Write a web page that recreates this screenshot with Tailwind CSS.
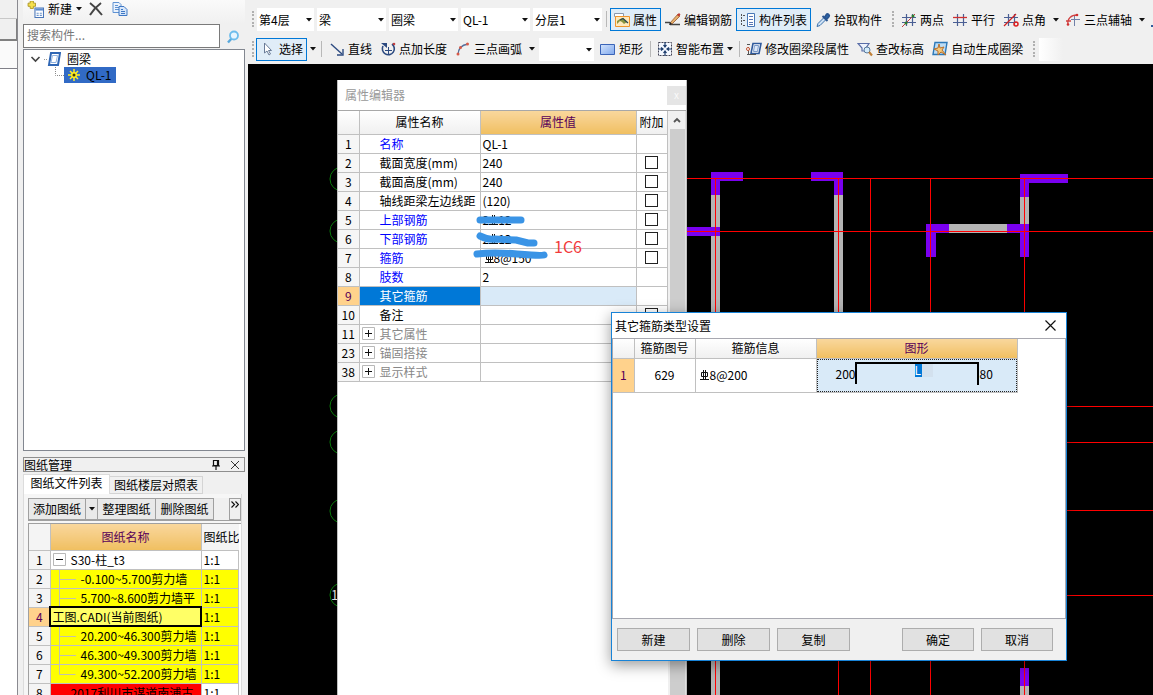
<!DOCTYPE html>
<html lang="zh-CN">
  <head>
    <meta charset="UTF-8" />
    <title>圈梁 - 属性编辑器</title>
    <meta name="viewport" content="width=device-width, initial-scale=1.0" />
    <script src="https://cdn.jsdelivr.net/npm/@tailwindcss/browser@4"></script>
  </head>
  <body class="flex h-screen overflow-hidden bg-[#f0f0f0] font-['Noto_Sans_CJK_SC',sans-serif] text-xs leading-4 text-black">

    <!-- Símbolos compartidos -->
    <svg class="hidden">
      <symbol id="flecha" viewBox="0 0 6 4"><path d="M0 0h6L3 3.5z" fill="#111" /></symbol>
      <symbol id="barra" viewBox="0 0 9 10"><path d="M3.500 0v9M5.500 0v9M1.500 2.500h6v4h-6zM0 9.500h9" fill="none" stroke="#111" /></symbol>
      <symbol id="mas" viewBox="0 0 13 13"><path d="M.5.5h12v12H.5z" fill="#fff" stroke="#b8b8b8" /><path d="M3 6.500h7M6.500 3v7" stroke="#111" /></symbol>
      <symbol id="rejilla" viewBox="0 0 16 16"><path d="M5.500 2v12M11.500 2v12M1 5.500h14M1 10.500h14" stroke="#4a5f94" stroke-width="1.200" fill="none" /></symbol>
    </svg>

    <!-- Borde izquierdo -->
    <div class="flex w-[18px] shrink-0 flex-col border-r border-[#8a8a90]">
      <div class="h-[19px] border-b border-[#c8c8c8]"></div>
      <div class="h-[22px] border-r border-b-2 border-[#808080]"></div>
      <div class="h-[27px] bg-[#fafafa]"></div>
      <div class="flex-1 border-t border-[#808088] bg-white"></div>
    </div>

    <!-- Panel de componentes y planos -->
    <aside class="flex w-[230px] shrink-0 flex-col pr-[3px] pl-[5px]">
      <div class="flex h-6 shrink-0 items-start bg-gradient-to-b from-[#fafafa] to-[#f0f0f0] pl-1">
        <button class="flex h-[18px] items-center gap-1">
          <svg class="h-[17px] w-[17px]" viewBox="0 0 16 16">
            <path d="M3 0h3v2h2v3H6v2H3V5H1V2h2z" fill="#f5e04c" stroke="#a8901c" stroke-width=".8" />
            <path d="M7.500 6.500h8v9h-8z" fill="#fff" stroke="#4a76b8" /><path d="M8 7h7v2H8z" fill="#5c8cd0" />
            <path d="M9 11.500h2M12 11.500h2M9 13.500h2M12 13.500h2" stroke="#6b94cc" />
          </svg>
          <span>新建</span>
          <svg class="h-1 w-1.5"><use href="#flecha" /></svg>
        </button>
        <button class="ml-1 flex h-[18px] w-5 items-center justify-center" aria-label="删除构件">
          <svg class="h-[14px] w-[14px]" viewBox="0 0 14 14"><path d="M1 1c4 3 8 7 12 12M12 1C8 4 4 8 1 13" fill="none" stroke="#444" stroke-width="2" /></svg>
        </button>
        <button class="ml-1 flex h-[18px] w-5 items-center justify-center" aria-label="复制构件">
          <svg class="h-4 w-4" viewBox="0 0 16 16">
            <path d="M1 1.500h6l2 2v8H1z" fill="#eaf2fc" stroke="#5f92d2" /><path d="M3 4.500h3M3 6.500h4M3 8.500h4" stroke="#5f92d2" />
            <path d="M7 5.500h5l3 3v6H7z" fill="#d6e6fa" stroke="#3f78c4" /><path d="M9 8.500h2M9 10.500h4M9 12.500h4" stroke="#3f78c4" />
          </svg>
        </button>
      </div>

      <div class="flex h-[25px] shrink-0">
        <input type="text" placeholder="搜索构件..." aria-label="搜索构件"
          class="h-6 w-[197px] border border-[#7a7a7a] bg-white px-[3px] pb-1 text-xs placeholder:text-[#777]" />
        <button class="flex flex-1 items-center justify-center" aria-label="搜索">
          <svg class="h-[14px] w-[14px]" viewBox="0 0 14 14"><path d="M6 8L2 12.500" stroke="#58a8dc" stroke-width="2.400" /><circle cx="8" cy="5.500" r="4" fill="#e6f5ff" stroke="#6cbcec" stroke-width="1.800" /></svg>
        </button>
      </div>

      <!-- Árbol -->
      <div class="h-[402px] shrink-0 border border-[#828790] bg-white">
        <div class="flex h-[17px] items-center pl-1.5">
          <svg class="h-4 w-[31px]" viewBox="0 0 31 16">
            <path d="M1.500 6l4 4 4-4" fill="none" stroke="#444" stroke-width="1.600" />
            <path d="M14 8.500h3" stroke="#999" stroke-dasharray="1 1" />
            <path d="M21 2h9l-2 12h-9z" fill="#fff" stroke="#2f66b4" stroke-width="2" /><path d="M22.500 4.500h5l-1.500 7h-5z" fill="#fff" stroke="#8fb2e0" />
          </svg>
          <span class="ml-1.5">圈梁</span>
        </div>
        <div class="flex h-4 items-center pl-[30px]">
          <svg class="h-4 w-2.5" viewBox="0 0 10 16"><path d="M1.500 0v8.500H10" fill="none" stroke="#888" stroke-dasharray="1 1" /></svg>
          <span class="flex h-4 items-center bg-[#316ac5] pr-1 pl-1">
            <svg class="h-3 w-3" viewBox="0 0 12 12"><path d="M6 0v12M0 6h12M2 2l8 8M10 2l-8 8" stroke="#ffee22" stroke-width="1.500" /><circle cx="6" cy="6" r="3" fill="#ffee22" /><circle cx="6" cy="6" r="1.500" fill="#443c00" /></svg>
            <span class="ml-1.5">QL-1</span>
          </span>
        </div>
      </div>

      <!-- Gestión de planos -->
      <div class="mt-1.5 flex h-[15px] shrink-0 items-center border border-[#8e8e8e]">
        <h2 class="flex-1">图纸管理</h2>
        <button aria-label="固定"><svg class="h-3 w-3" viewBox="0 0 12 12"><path d="M3.500 1.500h5v5h-5zM7.500 1.500v5M2 7h8M6 7v4" fill="none" stroke="#111" stroke-width="1.200" /></svg></button>
        <button class="mr-1 ml-2" aria-label="关闭图纸管理"><svg class="h-2.5 w-2.5" viewBox="0 0 10 10"><path d="M1 1l8 8M9 1L1 9" stroke="#333" /></svg></button>
      </div>
      <div class="mt-0.5 flex h-5 shrink-0 items-end">
        <button class="h-5 w-[87px] border border-b-0 border-[#dcdcdc] bg-white pb-1">图纸文件列表</button>
        <button class="h-[18px] w-[93px] border border-l-0 border-[#d4d4d4]">图纸楼层对照表</button>
      </div>
      <div class="mr-[3px] flex min-h-0 flex-1 flex-col border-r border-l border-[#dcdcdc] bg-[#f6f6f6] pt-1 pl-1">
        <div class="flex h-[23px] shrink-0 border-b border-[#a0a0a0] bg-[#f0f0f0]">
          <button class="w-[58px] border border-[#a0a0a0] bg-[#e9e9e9]">添加图纸</button>
          <button class="flex w-3 items-center justify-center border-y border-r border-[#a0a0a0] bg-[#e9e9e9]" aria-label="添加图纸选项"><svg class="h-1 w-1.5"><use href="#flecha" /></svg></button>
          <button class="w-[58px] border-y border-r border-[#a0a0a0] bg-[#e9e9e9]">整理图纸</button>
          <button class="w-[58px] border-y border-r border-[#a0a0a0] bg-[#e9e9e9]">删除图纸</button>
          <button class="ml-auto flex w-3 justify-center border border-[#a0a0a0] pt-0.5" aria-label="更多"><svg class="h-[7px] w-2" viewBox="0 0 8 7"><path d="M.5.5l3 3-3 3M4.500.5l3 3-3 3" fill="none" stroke="#111" stroke-width="1.200" /></svg></button>
        </div>
        <div class="mt-0.5 min-h-0 flex-1 overflow-hidden border-t border-l border-[#a0a0a0] bg-white pr-0.5">
          <table class="w-full table-fixed border-collapse">
            <colgroup><col class="w-[21px]" /><col class="w-[151px]" /><col /></colgroup>
            <thead>
              <tr class="h-[26px] bg-[#f4f4f4]">
                <th class="border-r border-b border-[#c0c0c0]"></th>
                <th class="border-r border-b border-[#c0c0c0] bg-gradient-to-b from-[#f9d79c] to-[#f0bf60] font-normal text-[#580058]">图纸名称</th>
                <th class="overflow-hidden border-b border-[#c0c0c0] pl-0.5 text-left font-normal whitespace-nowrap">图纸比</th>
              </tr>
            </thead>
            <tbody class="[&_td]:h-[19px] [&_td]:overflow-hidden [&_td]:border-r [&_td]:border-b [&_td]:border-[#c0c0c0] [&_td]:whitespace-nowrap [&_th]:border-r [&_th]:border-b [&_th]:border-[#c0c0c0] [&_th]:bg-[#f4f4f4] [&_th]:font-normal">
              <tr><th>1</th><td class="pl-0.5"><div class="flex items-center gap-[5px]"><svg class="h-[13px] w-[13px]" viewBox="0 0 13 13"><path d="M.5.5h12v12H.5z" fill="#fff" stroke="#b8b8b8" /><path d="M3 6.500h7" stroke="#111" /></svg>S30-柱_t3</div></td><td class="pl-0.5">1:1</td></tr>
              <tr class="bg-[#ff0]"><th>2</th><td class="pl-2"><div class="flex items-center"><svg class="h-[18px] w-[22px] shrink-0" viewBox="0 0 22 18"><path d="M.5 0v18M1 9.500h16" stroke="#c0c0b0" /></svg>-0.100~5.700剪力墙</div></td><td class="pl-0.5">1:1</td></tr>
              <tr class="bg-[#ff0]"><th>3</th><td class="pl-2"><div class="flex items-center"><svg class="h-[18px] w-[22px] shrink-0" viewBox="0 0 22 18"><path d="M.5 0v18M1 9.500h16" stroke="#c0c0b0" /></svg>5.700~8.600剪力墙平</div></td><td class="pl-0.5">1:1</td></tr>
              <tr class="bg-[#ff0]"><th class="!bg-[#ffd28c] text-[#580058]">4</th><td class="bg-[#ffff66] pl-0.5 outline-2 -outline-offset-1 outline-black">工图.CADI(当前图纸)</td><td class="pl-0.5">1:1</td></tr>
              <tr class="bg-[#ff0]"><th>5</th><td class="pl-2"><div class="flex items-center"><svg class="h-[18px] w-[22px] shrink-0" viewBox="0 0 22 18"><path d="M.5 0v18M1 9.500h16" stroke="#c0c0b0" /></svg>20.200~46.300剪力墙</div></td><td class="pl-0.5">1:1</td></tr>
              <tr class="bg-[#ff0]"><th>6</th><td class="pl-2"><div class="flex items-center"><svg class="h-[18px] w-[22px] shrink-0" viewBox="0 0 22 18"><path d="M.5 0v18M1 9.500h16" stroke="#c0c0b0" /></svg>46.300~49.300剪力墙</div></td><td class="pl-0.5">1:1</td></tr>
              <tr class="bg-[#ff0]"><th>7</th><td class="pl-2"><div class="flex items-center"><svg class="h-[18px] w-[22px] shrink-0" viewBox="0 0 22 18"><path d="M.5 0v9.500h16" fill="none" stroke="#c0c0b0" /></svg>49.300~52.200剪力墙</div></td><td class="pl-0.5">1:1</td></tr>
              <tr><th>8</th><td class="bg-[#f00] pl-5">2017利川市谋道南浦古</td><td class="pl-0.5">1:1</td></tr>
            </tbody>
          </table>
        </div>
      </div>
    </aside>

    <main class="flex min-w-0 flex-1 flex-col">
      <!-- Barra superior -->
      <div class="flex h-[34px] shrink-0 items-end overflow-hidden pb-[3px] pl-1 whitespace-nowrap [&>*]:shrink-0">
        <div class="mr-[3px] mb-1 h-4 w-0.5 border-l-2 border-dotted border-[#b0b0b0]"></div>
        <div class="flex gap-[3px]">
          <div class="relative w-[57px]">
            <select aria-label="楼层" class="h-[23px] w-full appearance-none bg-white pl-0.5"><option>第4层</option></select>
            <svg class="pointer-events-none absolute top-2.5 right-0.5 h-1 w-1.5"><use href="#flecha" /></svg>
          </div>
          <div class="relative w-[69px]">
            <select aria-label="构件类型" class="h-[23px] w-full appearance-none bg-white pl-0.5"><option>梁</option></select>
            <svg class="pointer-events-none absolute top-2.5 right-0.5 h-1 w-1.5"><use href="#flecha" /></svg>
          </div>
          <div class="relative w-[69px]">
            <select aria-label="构件" class="h-[23px] w-full appearance-none bg-white pl-0.5"><option>圈梁</option></select>
            <svg class="pointer-events-none absolute top-2.5 right-0.5 h-1 w-1.5"><use href="#flecha" /></svg>
          </div>
          <div class="relative w-[69px]">
            <select aria-label="构件名称" class="h-[23px] w-full appearance-none bg-white pl-0.5"><option>QL-1</option></select>
            <svg class="pointer-events-none absolute top-2.5 right-0.5 h-1 w-1.5"><use href="#flecha" /></svg>
          </div>
          <div class="relative w-[69px]">
            <select aria-label="分层" class="h-[23px] w-full appearance-none bg-white pl-0.5"><option>分层1</option></select>
            <svg class="pointer-events-none absolute top-2.5 right-0.5 h-1 w-1.5"><use href="#flecha" /></svg>
          </div>
        </div>
        <div class="mr-[3px] mb-1 ml-1 h-4 w-px bg-[#b8b8b8]"></div>
        <button class="flex h-[23px] items-center gap-[3px] border border-[#0078d7] bg-[#e0edf8] px-[3px]">
          <svg class="h-4 w-4" viewBox="0 0 16 16"><path d="M.5 1.500h9v3h-9z" fill="#fff" stroke="#8a98ac" /><path d="M1.500 4.500h14v10h-14z" fill="#ffe9bc" stroke="#f0952c" /><path d="M3 12l3-3 2 1 2 2 3-2-4-4-3 1-3 2z" fill="#8a9440" /><path d="M6 8l3-1.500 5 4.500" fill="none" stroke="#2d4a52" stroke-width="1.300" /></svg>
          属性
        </button>
        <button class="flex h-[23px] items-center gap-[3px] border border-transparent px-[3px]">
          <svg class="h-4 w-4" viewBox="0 0 16 16"><path d="M0 10.500h5M5 12.500h10" stroke="#444" stroke-width="1.500" /><path d="M5 11l8-9 2 2-8 8z" fill="#e5b06c" stroke="#9a5a30" stroke-width=".8" /><path d="M12 3l2-2 1.500 1.500-2 2z" fill="#c03a30" /><path d="M4 13l1-3 2 2z" fill="#222" /></svg>
          编辑钢筋
        </button>
        <button class="flex h-[23px] items-center gap-[3px] border border-[#0078d7] bg-[#e0edf8] px-[3px]">
          <svg class="h-4 w-4" viewBox="0 0 16 16"><path d="M1.500 2v12M3 3.500h3M3 8.500h3M3 13.500h3" fill="none" stroke="#555" stroke-dasharray="2 1" /><path d="M7.500 1.500h7v13h-7z" fill="#fff" stroke="#4878b8" /><path d="M9 4.500h4M9 7.500h4M9 10.500h4M9 12.500h4" stroke="#5876b4" /></svg>
          构件列表
        </button>
        <button class="flex h-[23px] items-center gap-[3px] border border-transparent px-[3px]">
          <svg class="h-4 w-4" viewBox="0 0 16 16"><path d="M2 14.500l1-3 6-6 2 2-6 6z" fill="#cfe2f5" stroke="#3a70ac" /><path d="M7.500 4l5 5M9.500 5.500l2-3c1-1.500 3.500.5 2.500 2l-2.500 3z" fill="#2a64a8" stroke="#2a5590" stroke-width="1.800" /></svg>
          拾取构件
        </button>
        <div class="mr-[3px] mb-1 ml-1.5 h-4 w-0.5 border-l-2 border-dotted border-[#b0b0b0]"></div>
        <button class="flex h-[23px] items-center gap-[3px] border border-transparent px-[3px]">
          <svg class="h-4 w-4" viewBox="0 0 16 16"><use href="#rejilla" /><path d="M1 15L14 2" stroke="#c04040" /><circle cx="12" cy="4" r="1.500" fill="#2c7c2c" /><circle cx="5" cy="11" r="1.500" fill="#2c7c2c" /></svg>
          两点
        </button>
        <button class="flex h-[23px] items-center gap-[3px] border border-transparent px-[3px]">
          <svg class="h-4 w-4" viewBox="0 0 16 16"><use href="#rejilla" /><path d="M1 5.500h14" stroke="#d03030" stroke-width="1.300" /></svg>
          平行
        </button>
        <button class="flex h-[23px] items-center gap-[3px] border border-transparent px-[3px]">
          <svg class="h-4 w-4" viewBox="0 0 16 16"><use href="#rejilla" /><path d="M1 14L13 2" stroke="#d02020" stroke-width="1.300" /><circle cx="13" cy="12" r="2" fill="none" stroke="#e02020" stroke-width="1.500" /></svg>
          点角
        </button>
        <button class="flex h-[23px] w-[11px] items-center justify-center" aria-label="点角选项"><svg class="h-1 w-1.5"><use href="#flecha" /></svg></button>
        <button class="flex h-[23px] items-center gap-[3px] border border-transparent px-[3px]">
          <svg class="h-4 w-4" viewBox="0 0 16 16"><path d="M9.500 3v11M6 7.500h9" stroke="#7080a8" /><path d="M3 12C2 7 6 3 12 3M1 9h5" fill="none" stroke="#d04040" stroke-width="1.300" /><circle cx="3" cy="12.500" r="1.300" fill="#d03030" /><circle cx="12" cy="3" r="1.300" fill="#d03030" /></svg>
          三点辅轴
        </button>
        <button class="flex h-[23px] w-[11px] items-center justify-center" aria-label="三点辅轴选项"><svg class="h-1 w-1.5"><use href="#flecha" /></svg></button>
        <div class="mb-0.5 ml-1 h-1 w-2 border-t-2 border-[#2f5a9c]"></div>
      </div>

      <!-- Barra de dibujo -->
      <div class="flex h-[30px] shrink-0 items-center overflow-hidden pl-1 whitespace-nowrap [&>*]:shrink-0">
        <div class="mr-0.5 h-4 w-0.5 border-l-2 border-dotted border-[#b0b0b0]"></div>
        <button class="flex h-[23px] items-center gap-[3px] border border-[#0078d7] bg-[#e0edf8] px-[3px]">
          <svg class="h-4 w-4" viewBox="0 0 16 16"><path d="M4.500 2v10l2.500-2 2 4 1.500-1-2-3.500h3z" fill="#fff" stroke="#6a7c98" /></svg>
          选择
        </button>
        <button class="flex h-[23px] w-[11px] items-center justify-center" aria-label="选择选项"><svg class="h-1 w-1.5"><use href="#flecha" /></svg></button>
        <div class="mx-[3px] h-4 w-px bg-[#b8b8b8]"></div>
        <button class="flex h-[23px] items-center gap-[3px] border border-transparent px-[3px]">
          <svg class="h-4 w-4" viewBox="0 0 16 16"><path d="M2 3l11 10" stroke="#2c4a80" stroke-width="1.400" /><path d="M14 8v6H8" fill="none" stroke="#2c4a80" stroke-width="1.400" /></svg>
          直线
        </button>
        <button class="flex h-[23px] items-center gap-[3px] border border-transparent px-[3px]">
          <svg class="h-4 w-4" viewBox="0 0 16 16"><path d="M12 3a6 6 0 1 1-9 2" fill="none" stroke="#2c4a80" stroke-width="1.600" /><path d="M1 2h6v5z" fill="#2c4a80" /><path d="M5 9.500h7M8.500 6v7" stroke="#2c4a80" /><circle cx="14" cy="3" r="1.300" fill="#c04040" /></svg>
          点加长度
        </button>
        <button class="flex h-[23px] items-center gap-[3px] border border-transparent px-[3px]">
          <svg class="h-4 w-4" viewBox="0 0 16 16"><path d="M3 14C3 8 6 4 13 3" fill="none" stroke="#55709c" stroke-width="1.300" /><circle cx="3" cy="13" r="1.500" fill="#d85a48" /><circle cx="5.500" cy="6.500" r="1.500" fill="#d85a48" /><circle cx="12.500" cy="3" r="1.500" fill="#d85a48" /></svg>
          三点画弧
        </button>
        <button class="flex h-[23px] w-[11px] items-center justify-center" aria-label="画弧选项"><svg class="h-1 w-1.5"><use href="#flecha" /></svg></button>
        <div class="relative mx-0.5 w-[55px]">
          <select aria-label="绘制方式" class="block h-[23px] w-full appearance-none bg-white"><option></option></select>
          <svg class="pointer-events-none absolute top-2.5 right-0.5 h-1 w-1.5"><use href="#flecha" /></svg>
        </div>
        <button class="flex h-[23px] items-center gap-[3px] border border-transparent px-[3px]">
          <svg class="h-4 w-4" viewBox="0 0 16 16"><defs><linearGradient id="azul" x2="1" y2="1"><stop stop-color="#d4e4fb" /><stop offset="1" stop-color="#7fa8ee" /></linearGradient></defs><path d="M.5 3.500h14v10H.5z" fill="url(#azul)" stroke="#3a64b8" /></svg>
          矩形
        </button>
        <div class="mr-0.5 ml-[3px] h-4 w-px bg-[#b8b8b8]"></div>
        <button class="flex h-[23px] items-center gap-[3px] border border-transparent pr-0.5 pl-[3px]">
          <svg class="h-4 w-4" viewBox="0 0 16 16"><path d="M1.500 1.500h13v13h-13z" fill="#f4f8ff" stroke="#445" stroke-dasharray="2 1" /><path d="M8 1v5M8 10v5M1 8h5M10 8h5M6.500 4L8 6l1.500-2M6.500 12L8 10l1.500 2M4 6.500L6 8 4 9.500M12 6.500L10 8l2 1.500" fill="none" stroke="#1c3c6c" stroke-width="1.200" /></svg>
          智能布置
          <svg class="h-1 w-1.5"><use href="#flecha" /></svg>
        </button>
        <div class="mr-0.5 ml-[3px] h-4 w-px bg-[#b8b8b8]"></div>
        <button class="flex h-[23px] items-center gap-[3px] border border-transparent px-[3px]">
          <svg class="h-4 w-4" viewBox="0 0 16 16"><path d="M7 2.500h8l-2 10H5z" fill="#fff" stroke="#2f5a9c" stroke-width="1.600" /><path d="M8.500 4.500h4l-1 6h-4z" fill="#dce8f8" stroke="#7898c8" /><path d="M1 3.500h3M2.500 6v7M1 13.500h9" stroke="#555" /><circle cx="2" cy="8" r="1.500" fill="#fff" stroke="#c05030" /></svg>
          修改圈梁段属性
        </button>
        <button class="flex h-[23px] items-center gap-[3px] border border-transparent px-[3px]">
          <svg class="h-4 w-4" viewBox="0 0 16 16"><path d="M1 2.500h11L9 7v3H5V7z" fill="#eef3fc" stroke="#5a6ea8" stroke-width="1.200" /><circle cx="10" cy="9" r="3" fill="#d4ecfb" stroke="#58789c" /><path d="M12 11l3 3.500" stroke="#c08038" stroke-width="2.200" /></svg>
          查改标高
        </button>
        <button class="flex h-[23px] items-center gap-[3px] border border-transparent px-[3px]">
          <svg class="h-4 w-4" viewBox="0 0 16 16"><path d="M3 1.500h12l-2 12H1z" fill="#bcdcf4" stroke="#2c78b8" stroke-width="1.400" /><path d="M7 3l1 4 4-1-2 3 4 5-5-3-3 3v-4l-4-2 4-1z" fill="#f6c878" stroke="#b8702c" /></svg>
          自动生成圈梁
        </button>
        <div class="mr-1 ml-1.5 h-4 w-0.5 border-l-2 border-dotted border-[#b0b0b0]"></div>
        <div class="h-[23px] w-6 bg-gradient-to-r from-white to-[#f0f0f0]"></div>
      </div>

      <!-- Lienzo CAD -->
      <div class="relative min-h-0 flex-1 overflow-hidden bg-black">
        <svg class="absolute inset-0 h-full w-full">
          <g transform="translate(-248 -64)" shape-rendering="crispEdges">
            <path d="M711 195h9v600h-9zM834 195h9v150h-9zM1020 197h9v27h-9zM949 224h58v9h-58zM1020 686h9v100h-9z" fill="#b4b4b4" />
            <path d="M711 172h32v9h-23v14h-9zM811 172h32v23h-9v-14h-23zM680 227h40v9h-40zM1020 174h48v9h-39v14h-9zM926 224h23v9h-13v24h-10zM1007 224h22v33h-9v-24h-13zM1020 668h9v18h-9z" fill="#7a00f0" />
            <path d="M680 178.500h2000M680 231.500h2000M680 406.500h2000M680 442.500h2000M680 510.500h2000M680 595.500h2000M715.500 178v1000M838.500 178v1000M870.500 178v1000M930.500 178v1000M1024.500 178v1000" stroke="#f00" />
          </g>
          <g transform="translate(-248 -64)" fill="none" stroke="#0a7a0a">
            <circle cx="342" cy="179" r="12" /><circle cx="342" cy="231" r="12" /><circle cx="342" cy="406" r="12" />
            <circle cx="342" cy="442" r="12" /><circle cx="342" cy="511" r="12" /><circle cx="342" cy="595" r="12" />
          </g>
          <text x="83" y="536" fill="#ddd" font-size="13">1</text>
        </svg>

        <!-- Editor de propiedades -->
        <section class="absolute top-4 bottom-0 left-[89px] flex w-[350px] flex-col border-r border-l border-[#c0c0c0] bg-white">
          <header class="flex h-[31px] shrink-0 items-center justify-between border-b border-[#a8a8a8] pl-[7px]">
            <h2 class="text-[#999]">属性编辑器</h2>
            <button class="h-[19px] w-[19px] bg-[#e5e5e5] text-[10px] leading-4 text-[#fafafa]" aria-label="关闭属性编辑器">x</button>
          </header>
          <div class="flex min-h-0 flex-1">
            <table class="w-[329px] table-fixed self-start border-collapse">
              <colgroup><col class="w-[21px]" /><col class="w-[121px]" /><col class="w-[156px]" /><col class="w-[31px]" /></colgroup>
              <thead>
                <tr class="h-[23px] bg-gradient-to-b from-white to-[#f0f0f0] [&>th]:border-r [&>th]:border-b [&>th]:border-[#c0c0c0] [&>th]:font-normal">
                  <th></th>
                  <th>属性名称</th>
                  <th class="bg-gradient-to-b from-[#f9d79c] to-[#f0bf60] text-[#580058]">属性值</th>
                  <th class="whitespace-nowrap">附加</th>
                </tr>
              </thead>
              <tbody class="[&_input]:mx-auto [&_input]:block [&_input]:h-[13px] [&_input]:w-[13px] [&_input]:appearance-none [&_input]:border [&_input]:border-[#222] [&_td]:h-[19px] [&_td]:border-r [&_td]:border-b [&_td]:border-[#c0c0c0] [&_td]:whitespace-nowrap [&_th]:border-r [&_th]:border-b [&_th]:border-[#c0c0c0] [&_th]:bg-[#f6f6f6] [&_th]:font-normal">
                <tr><th>1</th><td class="pl-5 text-[#00f]">名称</td><td class="pl-0.5">QL-1</td><td></td></tr>
                <tr><th>2</th><td class="pl-5">截面宽度(mm)</td><td class="pl-0.5">240</td><td><input type="checkbox" aria-label="附加截面宽度" /></td></tr>
                <tr><th>3</th><td class="pl-5">截面高度(mm)</td><td class="pl-0.5">240</td><td><input type="checkbox" aria-label="附加截面高度" /></td></tr>
                <tr><th>4</th><td class="pl-5">轴线距梁左边线距</td><td class="pl-0.5">(120)</td><td><input type="checkbox" aria-label="附加轴线距梁左边线距" /></td></tr>
                <tr><th>5</th><td class="pl-5 text-[#00f]">上部钢筋</td><td><div class="flex items-center pl-0.5">2<svg class="h-2.5 w-[9px]"><use href="#barra" /></svg>12</div></td><td><input type="checkbox" aria-label="附加上部钢筋" /></td></tr>
                <tr><th>6</th><td class="pl-5 text-[#00f]">下部钢筋</td><td><div class="flex items-center pl-0.5">2<svg class="h-2.5 w-[9px]"><use href="#barra" /></svg>12</div></td><td><input type="checkbox" aria-label="附加下部钢筋" /></td></tr>
                <tr><th>7</th><td class="pl-5 text-[#00f]">箍筋</td><td><div class="flex items-center pl-1"><svg class="h-2.5 w-[9px]"><use href="#barra" /></svg>8@150</div></td><td><input type="checkbox" aria-label="附加箍筋" /></td></tr>
                <tr><th>8</th><td class="pl-5 text-[#00f]">肢数</td><td class="pl-0.5">2</td><td></td></tr>
                <tr><th class="!bg-[#ffd28c] text-[#580058]">9</th><td class="bg-[#0078d7] pl-5 text-white">其它箍筋</td><td class="bg-[#d9eaf8]"></td><td></td></tr>
                <tr><th>10</th><td class="pl-5">备注</td><td></td><td><input type="checkbox" aria-label="附加备注" /></td></tr>
                <tr class="text-[#888]"><th class="text-black">11</th><td class="pl-0.5"><button class="flex items-center gap-[5px]"><svg class="h-[13px] w-[13px]"><use href="#mas" /></svg>其它属性</button></td><td></td><td></td></tr>
                <tr class="text-[#888]"><th class="text-black">23</th><td class="pl-0.5"><button class="flex items-center gap-[5px]"><svg class="h-[13px] w-[13px]"><use href="#mas" /></svg>锚固搭接</button></td><td></td><td></td></tr>
                <tr class="text-[#888]"><th class="text-black">38</th><td class="pl-0.5"><button class="flex items-center gap-[5px]"><svg class="h-[13px] w-[13px]"><use href="#mas" /></svg>显示样式</button></td><td></td><td></td></tr>
              </tbody>
            </table>
            <div class="flex w-[18px] flex-col border-r border-[#e0e0e0] bg-[#f0f0f0] pl-0.5">
              <button class="flex h-[18px] items-center justify-center" aria-label="向上滚动"><svg class="h-1.5 w-2" viewBox="0 0 8 6"><path d="M1 5l3-3 3 3" fill="none" stroke="#555" stroke-width="1.800" /></svg></button>
              <div class="flex-1 bg-[#cdcdcd]"></div>
            </div>
          </div>

          <!-- Anotaciones -->
          <svg class="pointer-events-none absolute top-0 left-0 h-[220px] w-[260px]" fill="none" stroke="#3a94e6" stroke-width="7" stroke-linecap="round" stroke-linejoin="round">
            <path d="M142 140h41" />
            <path d="M142 156q8 4 14 3l22 1 12 3h6" />
            <path d="M139 174q16-2 40 0t27 1" />
          </svg>
          <span class="absolute top-[156px] left-[216px] text-base leading-5 text-[#f23a3a]">1C6</span>
        </section>

        <!-- Diálogo de estribos -->
        <section class="absolute top-[248px] left-[363px] flex h-[349px] w-[456px] flex-col border border-[#1883d7] bg-white shadow-[0_4px_14px_rgba(0,0,0,0.4)]">
          <header class="flex h-[25px] shrink-0 items-center justify-between pr-2.5 pl-[3px]">
            <h2>其它箍筋类型设置</h2>
            <button aria-label="关闭"><svg class="h-[11px] w-[11px]" viewBox="0 0 11 11"><path d="M.5.5l10 10M10.500.5l-10 10" stroke="#111" stroke-width="1.200" /></svg></button>
          </header>
          <div class="flex-1 border border-[#a8a8b0]">
            <table class="w-[404px] table-fixed border-collapse">
              <colgroup><col class="w-[21px]" /><col class="w-[61px]" /><col class="w-[121px]" /><col class="w-[201px]" /></colgroup>
              <thead>
                <tr class="h-[19px] bg-gradient-to-b from-white to-[#f0f0f0] [&>th]:border-r [&>th]:border-b [&>th]:border-[#c0c0c0] [&>th]:font-normal">
                  <th></th>
                  <th>箍筋图号</th>
                  <th>箍筋信息</th>
                  <th class="bg-gradient-to-b from-[#f9d79c] to-[#f0bf60] text-[#580058]">图形</th>
                </tr>
              </thead>
              <tbody>
                <tr class="h-[34px] [&>*]:border-r [&>*]:border-b [&>*]:border-[#c0c0c0]">
                  <th class="bg-[#ffd28c] font-normal text-[#580058]">1</th>
                  <td class="text-center">629</td>
                  <td><div class="flex items-center gap-px pl-1"><svg class="h-2.5 w-[9px]"><use href="#barra" /></svg>8@200</div></td>
                  <td class="bg-[#d9eaf8] p-0">
                    <div class="relative flex h-[33px] items-start border border-dotted border-[#222] pt-0.5 pl-[18px]">
                      <span class="mt-1">200</span>
                      <svg class="h-[23px] w-[124px]" viewBox="0 0 124 23"><path d="M1 22V1h122v22" fill="none" stroke="#000" stroke-width="2" /></svg>
                      <span class="mt-1">80</span>
                      <span class="absolute top-1 left-[97px] h-[13px] w-[18px] bg-[#d3e1ee] leading-3 text-white"><span class="block h-[13px] w-[7px] bg-[#0078d7]">L</span></span>
                    </div>
                  </td>
                </tr>
              </tbody>
            </table>
          </div>
          <footer class="flex h-[41px] shrink-0 items-center gap-[7px] bg-[#f0f0f0] pr-[13px] pl-[5px]">
            <button class="h-[23px] w-[73px] border border-[#adadad] bg-[#e1e1e1]">新建</button>
            <button class="h-[23px] w-[73px] border border-[#adadad] bg-[#e1e1e1]">删除</button>
            <button class="h-[23px] w-[73px] border border-[#adadad] bg-[#e1e1e1]">复制</button>
            <button class="ml-auto h-[23px] w-[72px] border border-[#adadad] bg-[#e1e1e1]">确定</button>
            <button class="h-[23px] w-[72px] border border-[#adadad] bg-[#e1e1e1]">取消</button>
          </footer>
        </section>
      </div>
    </main>
  </body>
</html>
